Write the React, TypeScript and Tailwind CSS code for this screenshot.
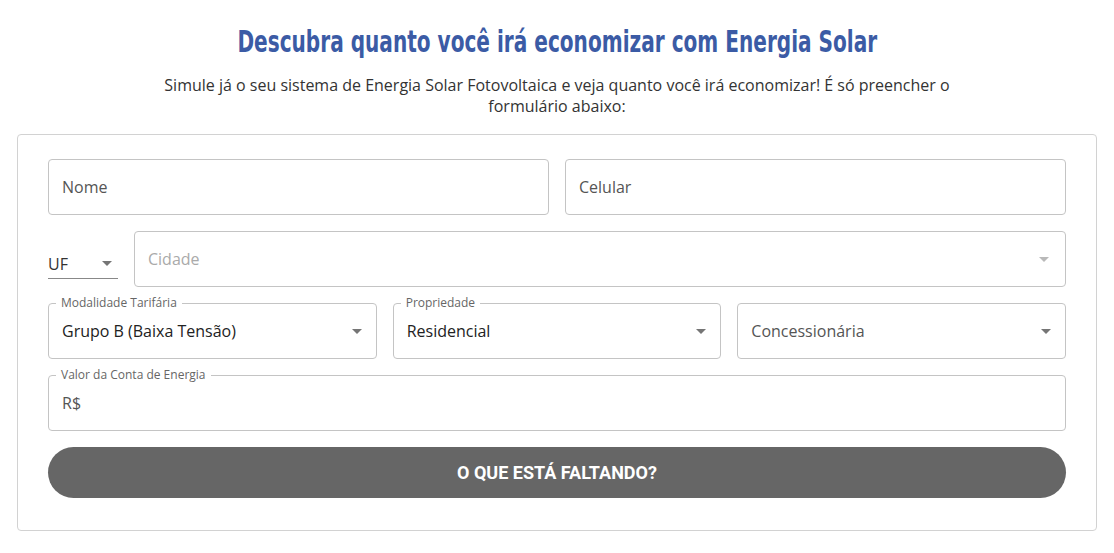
import React from 'react';

const Arrow = () => (
  <svg width="10" height="5" viewBox="0 0 10 5" className="shrink-0">
    <path d="M0 0 L10 0 L5 5 Z" fill="#757575" />
  </svg>
);

const Outlined: React.FC<{
  label?: string;
  children: React.ReactNode;
  className?: string;
}> = ({ label, children, className = '' }) => (
  <div
    className={`relative h-[56px] rounded-[4px] border border-[#c4c4c4] flex items-center px-[13px] ${className}`}
  >
    {label && (
      <span className="absolute -top-[8px] left-[7px] bg-white px-[5px] text-[12px] leading-[14px] text-[#666]">
        {label}
      </span>
    )}
    {children}
  </div>
);

const App: React.FC = () => {
  return (
    <div
      className="min-h-screen bg-white flex flex-col items-center pt-[22px]"
      style={{ fontFamily: '"Open Sans", "Noto Sans", sans-serif' }}
    >
      {/* Header */}
      <h1
        className="text-[31px] leading-[38px] font-bold text-[#3b5ba5] whitespace-nowrap scale-x-[0.72]"
        style={{ fontFamily: '"DejaVu Sans Condensed", "Roboto", sans-serif' }}
      >
        Descubra quanto você irá economizar com Energia Solar
      </h1>
      <p className="mt-[15px] max-w-[800px] text-center text-[16px] leading-[21px] text-[#333]">
        Simule já o seu sistema de Energia Solar Fotovoltaica e veja quanto você irá economizar! É só preencher o
        formulário abaixo:
      </p>

      {/* Form card */}
      <div className="mt-[17px] w-[1080px] rounded-[4px] border border-[#d2d2d2] px-[30px] pt-[24px] pb-[32px] flex flex-col gap-[16px]">
        <div className="grid grid-cols-2 gap-[16px]">
          <Outlined>
            <span className="text-[16px] text-[#555]">Nome</span>
          </Outlined>
          <Outlined>
            <span className="text-[16px] text-[#555]">Celular</span>
          </Outlined>
        </div>

        <div className="flex gap-[16px]">
          <div className="w-[70px] h-[56px] flex items-end pb-[8px]">
            <div className="w-full h-[34px] border-b border-[#888] flex items-center justify-between pr-[6px] pt-[4px]">
              <span className="text-[16px] text-[#333]">UF</span>
              <Arrow />
            </div>
          </div>
          <Outlined className="flex-1 justify-between !pr-[16px]">
            <span className="text-[16px] text-[#aaa]">Cidade</span>
            <span className="opacity-50">
              <Arrow />
            </span>
          </Outlined>
        </div>

        <div className="grid grid-cols-3 gap-[16px]">
          <Outlined label="Modalidade Tarifária" className="justify-between !pr-[14px]">
            <span className="text-[16px] text-[#222]">Grupo B (Baixa Tensão)</span>
            <Arrow />
          </Outlined>
          <Outlined label="Propriedade" className="justify-between !pr-[14px]">
            <span className="text-[16px] text-[#222]">Residencial</span>
            <Arrow />
          </Outlined>
          <Outlined className="justify-between !pr-[14px]">
            <span className="text-[16px] text-[#555]">Concessionária</span>
            <Arrow />
          </Outlined>
        </div>

        <Outlined label="Valor da Conta de Energia">
          <span className="text-[16px] text-[#555]">R$</span>
        </Outlined>

        <button
          className="h-[51px] w-full rounded-full bg-[#666] text-white text-[18px] font-bold uppercase"
          style={{ fontFamily: '"Roboto", "Liberation Sans", sans-serif' }}
        >
          O que está faltando?
        </button>
      </div>
    </div>
  );
};

export default App;
